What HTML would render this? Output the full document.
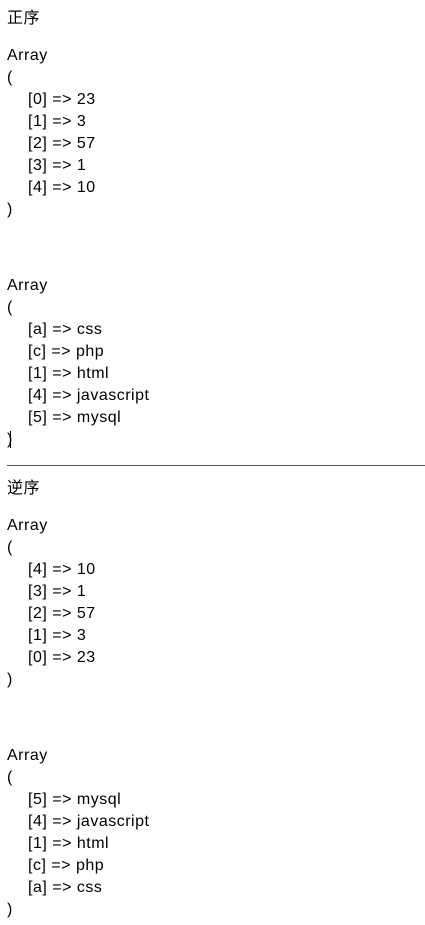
<!DOCTYPE html>
<html><head><meta charset="utf-8">
<style>
html,body{margin:0;padding:0;background:#fff;width:425px;height:925px;overflow:hidden}
body{position:relative;font-family:"Liberation Sans","Noto Sans CJK SC",sans-serif;font-size:16px;letter-spacing:0.5px;color:#000}
.l{position:absolute;left:7px;height:22px;line-height:22px;white-space:pre}
.i{left:28px}
hr{position:absolute;left:7px;top:465px;width:418px;margin:0;border:0;border-top:1px solid #555;height:0}
.cur{position:absolute;left:10px;top:431px;width:1px;height:17px;background:#000}
</style></head><body>
<div class="l" style="top:8px">正序</div>
<div class="l" style="top:45px">Array</div>
<div class="l" style="top:67px">(</div>
<div class="l i" style="top:89px">[0] =&gt; 23</div>
<div class="l i" style="top:111px">[1] =&gt; 3</div>
<div class="l i" style="top:133px">[2] =&gt; 57</div>
<div class="l i" style="top:155px">[3] =&gt; 1</div>
<div class="l i" style="top:177px">[4] =&gt; 10</div>
<div class="l" style="top:199px">)</div>

<div class="l" style="top:275px">Array</div>
<div class="l" style="top:297px">(</div>
<div class="l i" style="top:319px">[a] =&gt; css</div>
<div class="l i" style="top:341px">[c] =&gt; php</div>
<div class="l i" style="top:363px">[1] =&gt; html</div>
<div class="l i" style="top:385px">[4] =&gt; javascript</div>
<div class="l i" style="top:407px">[5] =&gt; mysql</div>
<div class="l" style="top:429px">)</div>
<div class="cur"></div>
<hr>
<div class="l" style="top:478px">逆序</div>
<div class="l" style="top:515px">Array</div>
<div class="l" style="top:537px">(</div>
<div class="l i" style="top:559px">[4] =&gt; 10</div>
<div class="l i" style="top:581px">[3] =&gt; 1</div>
<div class="l i" style="top:603px">[2] =&gt; 57</div>
<div class="l i" style="top:625px">[1] =&gt; 3</div>
<div class="l i" style="top:647px">[0] =&gt; 23</div>
<div class="l" style="top:669px">)</div>

<div class="l" style="top:745px">Array</div>
<div class="l" style="top:767px">(</div>
<div class="l i" style="top:789px">[5] =&gt; mysql</div>
<div class="l i" style="top:811px">[4] =&gt; javascript</div>
<div class="l i" style="top:833px">[1] =&gt; html</div>
<div class="l i" style="top:855px">[c] =&gt; php</div>
<div class="l i" style="top:877px">[a] =&gt; css</div>
<div class="l" style="top:899px">)</div>
</body></html>
